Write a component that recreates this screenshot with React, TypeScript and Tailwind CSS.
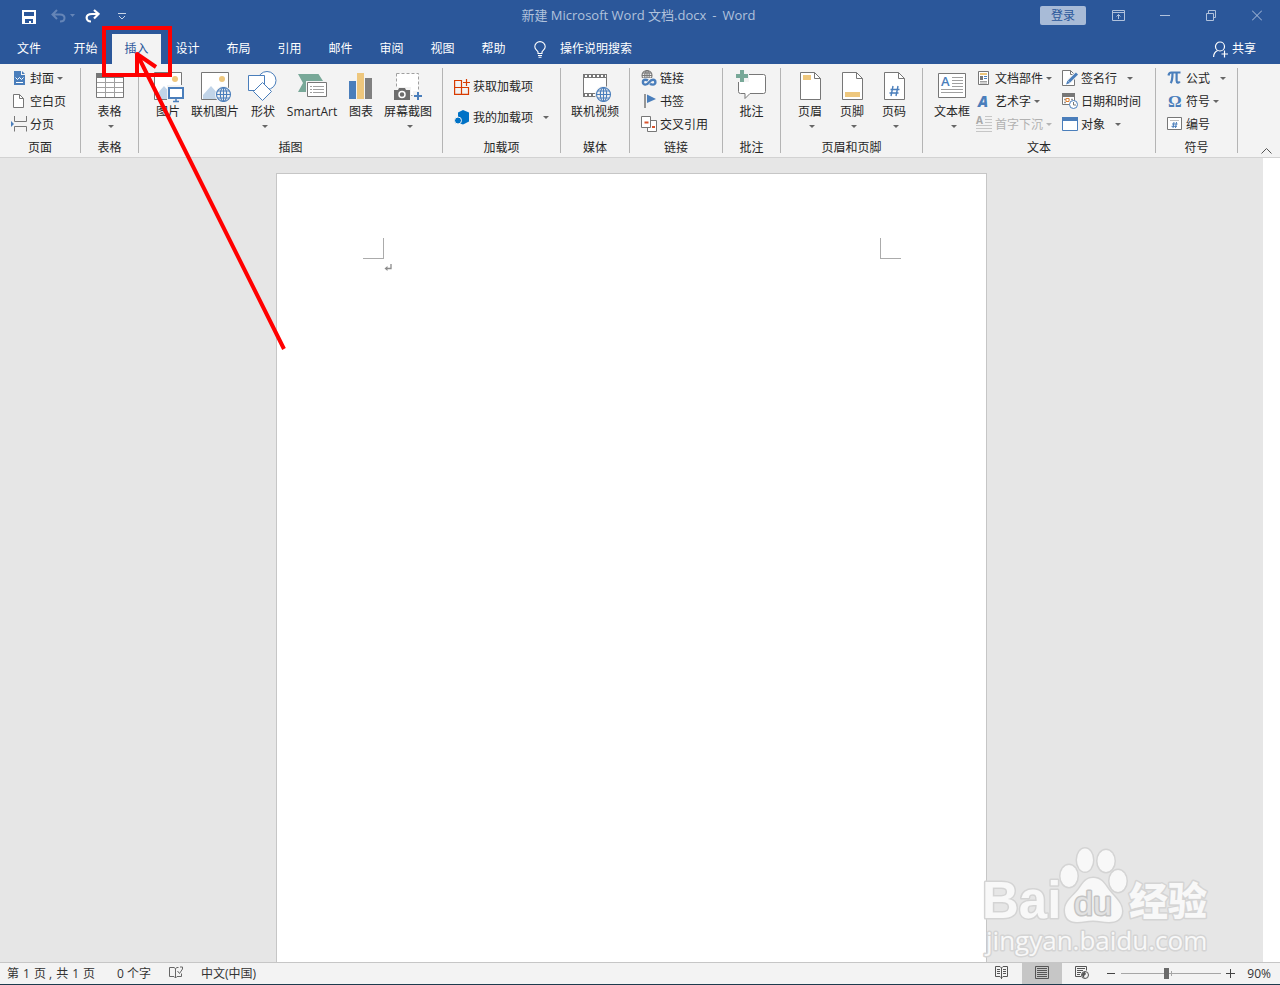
import type { ReactNode } from "react";

const BLUE = "#4a7ebb";
const GRAY = "#777777";

function Caret({ muted }: { muted?: boolean }) {
    return (
        <svg width="6" height="3" viewBox="0 0 6 3" className="shrink-0">
            <path d="M0 0h6L3 3z" fill={muted ? "#b5b5b5" : "#666666"} />
        </svg>
    );
}

function Icon16({ children }: { children: ReactNode }) {
    return (
        <svg width="16" height="17" viewBox="0 0 16 17" fill="none" className="shrink-0 overflow-visible">
            {children}
        </svg>
    );
}

function Icon32({ children }: { children: ReactNode }) {
    return (
        <svg width="32" height="32" viewBox="0 0 32 32" fill="none" className="shrink-0 overflow-visible">
            {children}
        </svg>
    );
}

function Globe({ cx, cy, r, color = BLUE }: { cx: number; cy: number; r: number; color?: string }) {
    return (
        <g stroke={color} strokeWidth="1.1">
            <circle cx={cx} cy={cy} r={r} fill="#f3f3f3" />
            <ellipse cx={cx} cy={cy} rx={r * 0.45} ry={r} />
            <path d={`M${cx - r} ${cy}h${r * 2}M${cx} ${cy - r}v${r * 2}`} />
            <path d={`M${cx - r * 0.85} ${cy - r * 0.5}h${r * 1.7}M${cx - r * 0.85} ${cy + r * 0.5}h${r * 1.7}`} />
        </g>
    );
}

function Photo() {
    return (
        <>
            <path d="M2.5 1.5h27v27h-27z" fill="#fff" stroke={GRAY} />
            <path d="M4 28v-4l8-9 8 9v4z" fill="#c1d4e8" />
            <circle cx="23" cy="8" r="3" fill="#eec77d" />
        </>
    );
}

function Sheet({ children }: { children: ReactNode }) {
    return (
        <Icon32>
            <path d="M6.5 1.5h14l6 6v21h-20z" fill="#fff" stroke={GRAY} />
            <path d="M20.5 1.5v6h6" stroke={GRAY} />
            {children}
        </Icon32>
    );
}

interface GroupProps {
    label: string;
    className: string;
    children: ReactNode;
}

function Group({ label, className, children }: GroupProps) {
    return (
        <section aria-label={label} className={`flex shrink-0 ${className}`}>
            <div className="flex flex-1 flex-col">
                <div className="flex h-[72px] shrink-0">{children}</div>
                <div className="text-center leading-6">{label}</div>
            </div>
            <div className="my-1 w-px bg-[#b4b4b4]" />
        </section>
    );
}

interface BigButtonProps {
    icon: ReactNode;
    label: string;
    caret?: boolean;
    className?: string;
}

function BigButton({ icon, label, caret, className = "w-full" }: BigButtonProps) {
    return (
        <button className={`flex shrink-0 flex-col items-center pt-[7px] ${className}`}>
            {icon}
            <span className="mt-px leading-4 whitespace-nowrap">{label}</span>
            {caret && (
                <span className="mt-[5px] ml-[3px] flex">
                    <Caret />
                </span>
            )}
        </button>
    );
}

interface SmallButtonProps {
    icon: ReactNode;
    label: string;
    caret?: "near" | "far";
    tall?: boolean;
    disabled?: boolean;
}

function SmallButton({ icon, label, caret, tall, disabled }: SmallButtonProps) {
    return (
        <button
            disabled={disabled}
            className={`flex items-center gap-[3px] whitespace-nowrap ${tall ? "h-[31px]" : "h-[23px]"} ${disabled ? "text-[#b1b1b1]" : ""}`}
        >
            {icon}
            <span>{label}</span>
            {caret && (
                <span className={caret === "far" ? "ml-[7px]" : ""}>
                    <Caret muted={disabled} />
                </span>
            )}
        </button>
    );
}

function TitleBar() {
    return (
        <header className="grid h-[30px] grid-cols-[1fr_auto_1fr] items-center">
            <div className="flex items-center pl-[22px]">
                <button aria-label="保存">
                    <svg width="14" height="14" viewBox="0 0 14 14" className="mt-1" shapeRendering="crispEdges">
                        <path d="M0 0h14v14H0z" fill="#fff" />
                        <path d="M2 2h10v4H2zM3 9h8v4H9v-2H7v2H3z" fill="#2b579a" />
                    </svg>
                </button>
                <button aria-label="撤消" className="ml-[15px] flex items-center gap-[3px]">
                    <svg width="16" height="14" viewBox="0 0 16 14" fill="none" stroke="#6585b7" strokeWidth="2" className="mt-0.5">
                        <path d="M6 1L1.5 5.5 6 10M2 5.5h7c6 0 6 7 0 7" />
                    </svg>
                    <svg width="5" height="3" viewBox="0 0 5 3">
                        <path d="M0 0h5L2.5 3z" fill="#6585b7" />
                    </svg>
                </button>
                <button aria-label="恢复" className="ml-[10px]">
                    <svg width="15" height="14" viewBox="0 0 15 14" fill="none" stroke="#fff" strokeWidth="2.2" className="mt-0.5">
                        <path d="M9 1l4.5 4L9 9.5M13 5H7C-.5 5 .5 12.500 6 12.500" />
                    </svg>
                </button>
                <button aria-label="自定义快速访问工具栏" className="ml-[18px]">
                    <svg width="8" height="7" viewBox="0 0 8 7" fill="none" stroke="#c8d4e6" className="mt-0.5">
                        <path d="M0 .5h8M1 3l3 3 3-3" />
                    </svg>
                </button>
            </div>
            <h1 className="mr-[3px] flex gap-1.5 text-[13px] text-[#b1c2dc]">
                <span>新建 Microsoft Word 文档.docx</span>
                <span>-</span>
                <span>Word</span>
            </h1>
            <div className="flex items-center justify-end">
                <button className="mr-[10px] h-[19px] w-[46px] rounded-[2px] bg-[#a8bbd7] leading-[19px] text-[#2b579a]">登录</button>
                <button aria-label="功能区显示选项" className="flex w-[46px] justify-center">
                    <svg width="14" height="11" viewBox="0 0 14 11" fill="none" stroke="#b1c2dc">
                        <path d="M.5.5h12v10H.5zM.5 2.500h12M6.500 9V4.500M4.500 6.500l2-2 2 2" />
                    </svg>
                </button>
                <button aria-label="最小化" className="flex w-[46px] justify-center">
                    <svg width="10" height="11" viewBox="0 0 10 11" stroke="#b1c2dc">
                        <path d="M0 5.500h10" />
                    </svg>
                </button>
                <button aria-label="向下还原" className="flex w-[46px] justify-center">
                    <svg width="10" height="11" viewBox="0 0 10 11" fill="none" stroke="#b1c2dc">
                        <path d="M.5 3.500h7v7h-7zM2.500 3.500v-3h7v7h-2" />
                    </svg>
                </button>
                <button aria-label="关闭" className="flex w-[46px] justify-center">
                    <svg width="10" height="11" viewBox="0 0 10 11" stroke="#b1c2dc">
                        <path d="M0 .5l10 10M10 .5l-10 10" />
                    </svg>
                </button>
            </div>
        </header>
    );
}

const TABS = ["开始", "插入", "设计", "布局", "引用", "邮件", "审阅", "视图", "帮助"];

function TabBar() {
    return (
        <nav className="flex h-[34px] items-end">
            <button className="mr-[3px] h-[30px] w-[58px] pb-px">文件</button>
            {TABS.map((tab) => (
                <button
                    key={tab}
                    className={`mr-0.5 h-[30px] w-[49px] pb-px ${tab === "插入" ? "bg-[#f3f3f3] text-[#2b579a]" : ""}`}
                >
                    {tab}
                </button>
            ))}
            <label className="ml-[14px] flex h-[30px] items-center">
                <svg width="12" height="17" viewBox="0 0 12 17" fill="none" stroke="#fff" strokeWidth="1.1">
                    <path d="M4 12.500V11C3.500 9.500.8 8.500.8 5.800a5.200 5.200 0 0 1 10.400 0C11.200 8.500 8.500 9.500 8 11v1.500zM4 14.500h4M4.500 16.300h3" />
                </svg>
                <input
                    type="text"
                    aria-label="操作说明搜索"
                    placeholder="操作说明搜索"
                    className="ml-[14px] w-24 bg-transparent outline-none placeholder:text-white"
                />
            </label>
            <button className="mr-6 ml-auto flex h-[30px] items-center gap-1 pb-px">
                <svg width="15" height="17" viewBox="0 0 15 17" fill="none" stroke="#fff" strokeWidth="1.2" className="mt-0.5">
                    <circle cx="7" cy="5.500" r="4.500" />
                    <path d="M.6 16c0-4 2-5.500 4-6.500M8.500 13h6.500M11.500 9.500v7" />
                </svg>
                共享
            </button>
        </nav>
    );
}

function Ribbon() {
    return (
        <div className="flex h-[94px] border-b border-[#d2d2d2] bg-[#f3f3f3]">
            <Group label="页面" className="w-[81px]">
                <div className="flex flex-col pt-[3px] pl-[11px]">
                    <SmallButton
                        label="封面"
                        caret="near"
                        icon={
                            <Icon16>
                                <path d="M3 1h7v4h4v10H3z" fill={BLUE} />
                                <path d="M11 1l3 3h-3z" fill={BLUE} />
                                <path d="M4.500 7.500l2 2 2-2 2 2 2-2M5 12.500h7" stroke="#fff" />
                            </Icon16>
                        }
                    />
                    <SmallButton
                        label="空白页"
                        icon={
                            <Icon16>
                                <path d="M2.500 1.500h6l4 4v9h-10z" fill="#fff" stroke={GRAY} />
                                <path d="M8.500 1.500v4h4" stroke={GRAY} />
                            </Icon16>
                        }
                    />
                    <SmallButton
                        label="分页"
                        icon={
                            <Icon16>
                                <path d="M3.500 0v5.500h12V0M3.500 15.500v-5h12v5" stroke={GRAY} />
                                <path d="M0 5l3 3-3 3z" fill={BLUE} />
                            </Icon16>
                        }
                    />
                </div>
            </Group>

            <Group label="表格" className="w-[58px]">
                <BigButton
                    label="表格"
                    caret
                    icon={
                        <Icon32>
                            <path d="M2.500 2.500h27v24h-27z" fill="#fff" stroke={GRAY} />
                            <path d="M2 2h28v5H2z" fill={GRAY} />
                            <path d="M3 11.500h26M3 16.500h26M3 21.500h26M11.500 7v19M20.500 7v19" stroke="#a0a0a0" />
                        </Icon32>
                    }
                />
            </Group>

            <Group label="插图" className="w-[304px]">
                <div className="flex pl-[6px]">
                    <BigButton
                        label="图片"
                        className="w-[46px]"
                        icon={
                            <Icon32>
                                <Photo />
                                <path d="M15 14h18v18H15z" fill="#f3f3f3" />
                                <path d="M17 17h14v10H17z" fill="#fff" stroke={BLUE} strokeWidth="2" />
                                <path d="M24 28v2M21 30.500h6" stroke={BLUE} strokeWidth="1.500" />
                            </Icon32>
                        }
                    />
                    <BigButton
                        label="联机图片"
                        className="w-12"
                        icon={
                            <Icon32>
                                <Photo />
                                <circle cx="24.500" cy="23.500" r="8.500" fill="#f3f3f3" />
                                <Globe cx={24.5} cy={23.5} r={7} />
                            </Icon32>
                        }
                    />
                    <BigButton
                        label="形状"
                        caret
                        className="w-12"
                        icon={
                            <Icon32>
                                <g fill="#fff" stroke={BLUE}>
                                    <circle cx="20" cy="9.500" r="9" />
                                    <path d="M1.500 4.500h16v15h-16z" />
                                    <path d="M15.500 11.500l9 9-9 9-9-9z" />
                                </g>
                            </Icon32>
                        }
                    />
                    <BigButton
                        label="SmartArt"
                        className="w-[50px]"
                        icon={
                            <Icon32>
                                <path d="M2 3h20.500l4.500 7H16l-4 11H2l5-9z" fill="#78a898" />
                                <path d="M10 10h22v18H10z" fill="#f3f3f3" />
                                <path d="M11.500 11.500h19v14h-19z" fill="#fff" stroke={GRAY} />
                                <path d="M14 15.500h2M14 18.500h2M14 21.500h2M17 15.500h11M17 18.500h11M17 21.500h11" stroke="#a0a0a0" />
                            </Icon32>
                        }
                    />
                    <BigButton
                        label="图表"
                        className="w-12"
                        icon={
                            <Icon32>
                                <path d="M4 10h7v18H4z" fill={BLUE} />
                                <path d="M12 2h7v26h-7z" fill="#eec77d" />
                                <path d="M20 7h7v21h-7z" fill="#808080" />
                            </Icon32>
                        }
                    />
                    <BigButton
                        label="屏幕截图"
                        caret
                        className="w-[46px]"
                        icon={
                            <Icon32>
                                <path d="M4.500 2.500h22v22h-22z" fill="#fff" stroke="#a0a0a0" strokeDasharray="3 2" />
                                <path d="M1 16h18v14H1zM21 20h10v10H21z" fill="#f3f3f3" />
                                <path d="M2 19h4l1-2h6l1 2h4v10H2z" fill="#6d6d6d" />
                                <circle cx="10" cy="23.500" r="3" stroke="#fff" strokeWidth="1.500" />
                                <path d="M22 25h8M26 21v8" stroke={BLUE} strokeWidth="2" />
                            </Icon32>
                        }
                    />
                </div>
            </Group>

            <Group label="加载项" className="w-[118px]">
                <div className="flex flex-col pt-[7px] pl-[11px]">
                    <SmallButton
                        label="获取加载项"
                        tall
                        icon={
                            <Icon16>
                                <path d="M.6 2.500h6.900v13.900H.6zM.6 9.500h13.900v6.900H.6zM7.500 9.500h7M12.500 1v7M9 4.500h7" stroke="#d83b01" strokeWidth="1.200" />
                            </Icon16>
                        }
                    />
                    <SmallButton
                        label="我的加载项"
                        caret="far"
                        tall
                        icon={
                            <Icon16>
                                <path d="M9 1l6 2.500v9L9 15.500l-3-1V9L4 8V3.500z" fill="#0072c6" />
                                <circle cx="4" cy="11.500" r="3.500" fill="#0072c6" stroke="#f3f3f3" />
                            </Icon16>
                        }
                    />
                </div>
            </Group>

            <Group label="媒体" className="w-[69px]">
                <BigButton
                    label="联机视频"
                    icon={
                        <Icon32>
                            <path d="M4.500 3.500h23v22h-23z" fill="#fff" stroke={GRAY} />
                            <path d="M4 5h24M4 24h24" stroke={GRAY} strokeWidth="4" />
                            <path d="M6 5h21M6 24h21" stroke="#fff" strokeWidth="2" strokeDasharray="2 2" />
                            <circle cx="24.500" cy="23.500" r="8.500" fill="#f3f3f3" />
                            <Globe cx={24.5} cy={23.5} r={7} />
                        </Icon32>
                    }
                />
            </Group>

            <Group label="链接" className="w-[93px]">
                <div className="flex flex-col pt-[3px] pl-[11px]">
                    <SmallButton
                        label="链接"
                        icon={
                            <Icon16>
                                <Globe cx={6} cy={5.5} r={5} color={GRAY} />
                                <path d="M0 8h16v9H0z" fill="#f3f3f3" />
                                <path
                                    d="M7 10.500C6 9.800 5.500 9.800 4.300 9.800a2.300 2.300 0 0 0 0 4.800c4 0 3.700-4.800 7.700-4.800a2.300 2.300 0 0 1 0 4.800c-1.300 0-2 0-3-.8"
                                    stroke={BLUE}
                                    strokeWidth="2.400"
                                />
                            </Icon16>
                        }
                    />
                    <SmallButton
                        label="书签"
                        icon={
                            <Icon16>
                                <path d="M4 1v14" stroke={GRAY} strokeWidth="1.500" />
                                <path d="M6 1.500l9 4.500-9 4z" fill={BLUE} />
                            </Icon16>
                        }
                    />
                    <SmallButton
                        label="交叉引用"
                        icon={
                            <Icon16>
                                <path d="M.5.500h9v11h-9z" fill="#fff" stroke={GRAY} />
                                <path d="M6.500 15.500v-4M9.500 4.500h6v11h-9" stroke={GRAY} />
                                <path d="M10 5h5v10H7v-3h3z" fill="#fff" />
                                <path d="M3.500 5.500h4v2h-4zM11 10h3v2h-3z" fill="#d9532c" />
                            </Icon16>
                        }
                    />
                </div>
            </Group>

            <Group label="批注" className="w-[58px]">
                <BigButton
                    label="批注"
                    icon={
                        <Icon32>
                            <path d="M4.500 3.500h23a2 2 0 0 1 2 2v15a2 2 0 0 1-2 2H14l-5 5v-5H4.500a2 2 0 0 1-2-2v-15a2 2 0 0 1 2-2z" fill="#fff" stroke={GRAY} />
                            <path d="M0 2h13v9H0z" fill="#f3f3f3" />
                            <path d="M0 5h12M6-1v12" stroke="#78a898" strokeWidth="4" />
                        </Icon32>
                    }
                />
            </Group>

            <Group label="页眉和页脚" className="w-[142px]">
                <div className="flex pl-2">
                    <BigButton
                        label="页眉"
                        caret
                        className="w-[42px]"
                        icon={
                            <Sheet>
                                <path d="M9 4h8v5H9z" fill="#eec77d" />
                            </Sheet>
                        }
                    />
                    <BigButton
                        label="页脚"
                        caret
                        className="w-[42px]"
                        icon={
                            <Sheet>
                                <path d="M9 21h15v5H9z" fill="#eec77d" />
                            </Sheet>
                        }
                    />
                    <BigButton
                        label="页码"
                        caret
                        className="w-[42px]"
                        icon={
                            <Sheet>
                                <path d="M15 15l-2 10M20 15l-2 10M12.500 18.500h9M11.500 22h9" stroke={BLUE} strokeWidth="1.400" />
                            </Sheet>
                        }
                    />
                </div>
            </Group>

            <Group label="文本" className="w-[233px]">
                <div className="flex pl-[5px]">
                    <BigButton
                        label="文本框"
                        caret
                        className="w-12"
                        icon={
                            <Icon32>
                                <path d="M2.500 2.500h27v24h-27z" fill="#fff" stroke={GRAY} />
                                <path d="M16 6.500h11M16 9.500h11M16 12.500h11M16 15.500h11M5 18.500h22M5 21.500h22" stroke="#a0a0a0" />
                                <text x="5" y="15" fontSize="13" fontWeight="600" fill={BLUE}>
                                    A
                                </text>
                            </Icon32>
                        }
                    />
                    <div className="flex w-[86px] flex-col pt-[3px]">
                        <SmallButton
                            label="文档部件"
                            caret="near"
                            icon={
                                <Icon16>
                                    <path d="M2.500 1.500h10v13h-10z" fill="#fff" stroke={GRAY} />
                                    <path d="M4 3h7v2H4z" fill="#eec77d" />
                                    <path d="M4 6h3v4H4z" fill={GRAY} />
                                    <path d="M8 6.500h3M8 8.500h3" stroke={BLUE} />
                                    <path d="M4 11.500h7M4 13h7" stroke="#a0a0a0" />
                                </Icon16>
                            }
                        />
                        <SmallButton
                            label="艺术字"
                            caret="near"
                            icon={
                                <Icon16>
                                    <text x="2" y="14" fontSize="15" fontWeight="800" fontStyle="italic" fill={BLUE}>
                                        A
                                    </text>
                                </Icon16>
                            }
                        />
                        <SmallButton
                            label="首字下沉"
                            caret="near"
                            disabled
                            icon={
                                <Icon16>
                                    <path d="M9 .5h7M9 3.500h7M9 6.500h7M0 9.500h16M0 12.500h16M0 15.500h16" stroke="#c6c6c6" />
                                    <text x="0" y="8" fontSize="10" fontWeight="700" fill="#a8a8a8">
                                        A
                                    </text>
                                </Icon16>
                            }
                        />
                    </div>
                    <div className="flex flex-col pt-[3px]">
                        <SmallButton
                            label="签名行"
                            caret="far"
                            icon={
                                <Icon16>
                                    <path d="M.5.500h8l4 4v11H.5z" fill="#fff" stroke={GRAY} />
                                    <path d="M8.500.5v4h4" stroke={GRAY} />
                                    <path d="M14.500 4L7 11.500" stroke="#f3f3f3" strokeWidth="5" />
                                    <path d="M15 3.500L7 11.500" stroke={BLUE} strokeWidth="3" />
                                    <path d="M5.500 10.500l2.500 2.500-4 1.500z" fill={BLUE} />
                                </Icon16>
                            }
                        />
                        <SmallButton
                            label="日期和时间"
                            icon={
                                <Icon16>
                                    <path d="M.5.500h12v11H.5z" fill="#fff" stroke={GRAY} />
                                    <path d="M0 0h13v4H0z" fill={GRAY} />
                                    <path d="M2 6.500h9M2 9.500h3" stroke="#999" strokeWidth="1.500" strokeDasharray="2 1.500" />
                                    <path d="M4 5.500h3v3H4z" fill="#fff" stroke="#e08030" />
                                    <circle cx="11.500" cy="11.500" r="4" fill="#fff" stroke={BLUE} />
                                    <path d="M11.500 9v3h2.500" stroke={GRAY} />
                                </Icon16>
                            }
                        />
                        <SmallButton
                            label="对象"
                            caret="far"
                            icon={
                                <Icon16>
                                    <path d="M.5 1.500h15v13H.5z" fill="#fff" stroke={BLUE} />
                                    <path d="M0 1h16v4H0z" fill={BLUE} />
                                </Icon16>
                            }
                        />
                    </div>
                </div>
            </Group>

            <Group label="符号" className="w-[82px]">
                <div className="flex flex-col pt-[3px] pl-[11px]">
                    <SmallButton
                        label="公式"
                        caret="far"
                        icon={
                            <Icon16>
                                <path
                                    d="M1.500 5.500c.3-2 1.200-3 2.800-3H13.500M5.500 3c0 5-.3 8-1.800 10.200M9.600 3v7.500c0 2.500 2 2.800 3.200 1"
                                    stroke={BLUE}
                                    strokeWidth="2.200"
                                />
                            </Icon16>
                        }
                    />
                    <SmallButton
                        label="符号"
                        caret="near"
                        icon={
                            <Icon16>
                                <text x="1" y="14" fontSize="17" fontWeight="700" fontFamily="Liberation Serif, serif" fill={BLUE}>
                                    Ω
                                </text>
                            </Icon16>
                        }
                    />
                    <SmallButton
                        label="编号"
                        icon={
                            <Icon16>
                                <path d="M.5 1.500h14v12H.5z" fill="#fff" stroke={GRAY} />
                                <path d="M3 4.500h9" stroke="#c0c0c0" />
                                <path d="M7 6l-1 6M9.500 6l-1 6M5 8h5.500M4.500 10.300H10" stroke={BLUE} />
                            </Icon16>
                        }
                    />
                </div>
            </Group>

            <button aria-label="折叠功能区" className="mt-auto mr-2 mb-[3px] ml-auto">
                <svg width="11" height="6" viewBox="0 0 11 6" fill="none" stroke="#555">
                    <path d="M.5 5.500l5-5 5 5" />
                </svg>
            </button>
        </div>
    );
}

function Watermark() {
    return (
        <svg
            width="236"
            height="120"
            viewBox="0 0 236 120"
            className="absolute right-[62px] bottom-0 overflow-visible"
            fill="#f8f8f8"
            stroke="#d4d4d4"
            strokeWidth="3"
            strokeLinejoin="round"
            paintOrder="stroke"
        >
            <text x="0" y="76" fontSize="51" fontWeight="700" fontFamily="Liberation Sans, sans-serif">
                Bai
            </text>
            <ellipse cx="87" cy="34" rx="8.500" ry="11" />
            <ellipse cx="103" cy="18" rx="8" ry="11.500" />
            <ellipse cx="124" cy="19" rx="8.500" ry="11" />
            <ellipse cx="136" cy="39" rx="8.500" ry="11" />
            <path d="M111 36c8 0 11 5 15 11s14 13 14 22c0 8-6 11-13 11-6 0-10-1.500-16-1.500S101 80 95 80c-8 0-12-4-12-12 0-9 9-14 14-21s7-11 14-11z" />
            <text x="92" y="73" fontSize="34" fontFamily="Liberation Sans, sans-serif" fill="#e2e2e2" stroke="#c4c4c4">
                du
            </text>
            <text x="147" y="73" fontSize="39" fontWeight="900" fontFamily="Noto Sans CJK SC, sans-serif">
                经验
            </text>
            <text x="4" y="108" fontSize="26" fontFamily="Open Sans, sans-serif">
                jingyan.baidu.com
            </text>
        </svg>
    );
}

function DocumentArea() {
    return (
        <main className="relative flex flex-1 overflow-hidden bg-[#e6e6e6]">
            <div className="flex flex-1 justify-center pt-[15px]">
                <article className="w-[711px] border border-b-0 border-[#c6c6c6] bg-white pt-16 pr-[85px] pl-[86px]">
                    <div className="flex justify-between">
                        <div className="size-[21px] border-r border-b border-[#ababab]" />
                        <div className="size-[21px] border-b border-l border-[#ababab]" />
                    </div>
                    <svg width="8" height="8" viewBox="0 0 8 8" fill="none" stroke="#8c8c8c" className="mt-[5px] ml-[21px]">
                        <path d="M7 0v4.500H2" strokeWidth="1.300" />
                        <path d="M3.500 2v5L.5 4.500z" fill="#8c8c8c" stroke="none" />
                    </svg>
                </article>
            </div>
            <div className="w-[17px] bg-white" />
            <Watermark />
        </main>
    );
}

function StatusBar() {
    return (
        <footer className="flex h-[22px] items-center border-t border-[#c6c6c6] bg-[#f3f3f3] pl-[7px] text-[#333]">
            <div className="flex gap-1">
                <span>第</span>
                <span>1</span>
                <span>页 ,</span>
                <span>共</span>
                <span>1</span>
                <span>页</span>
            </div>
            <span className="ml-[22px]">0 个字</span>
            <button aria-label="校对" className="ml-[18px]">
                <svg width="14" height="13" viewBox="0 0 14 13" fill="none" stroke="#666" className="mb-0.5">
                    <path d="M6.500 2.500L5 1.500H.5v9H5l1.500 1.500 1.500-1.500h4.500v-3M6.500 2.500V12M6.500 2.500L8 1.500h1.500M8.500 5l2 2.500L13.500 3V1H11" />
                </svg>
            </button>
            <span className="ml-[18px]">中文(中国)</span>
            <div className="ml-auto flex h-full items-center">
                <button aria-label="阅读视图" className="flex w-10 justify-center">
                    <svg width="14" height="13" viewBox="0 0 14 13" fill="none" stroke="#555" className="mb-0.5">
                        <path d="M6.500 2v11M.5.500H5L6.500 2 8 .5h4.500v10H8L6.500 12 5 10.500H.5zM2 3.500h3M2 5.500h3M2 7.500h3M8 3.500h3M8 5.500h3M8 7.500h3" />
                    </svg>
                </button>
                <button aria-label="页面视图" className="flex h-full w-10 items-center justify-center bg-[#c6c6c6]">
                    <svg width="14" height="13" viewBox="0 0 14 13" fill="none" stroke="#555" className="mb-0.5">
                        <path d="M.5.500h13v12H.5zM2 2.500h10M2 4.500h10M2 6.500h10M2 8.500h10M2 10.500h10" />
                    </svg>
                </button>
                <button aria-label="Web 版式视图" className="flex w-10 justify-center">
                    <svg width="14" height="13" viewBox="0 0 14 13" fill="none" stroke="#555" className="mb-0.5">
                        <path d="M6 10.500H.5V.5h11v4M2 2.500h8M2 4.500h6M2 6.500h4M2 8.500h3" />
                        <circle cx="10" cy="9" r="3.500" fill="#f3f3f3" />
                        <path d="M7 8c1-2 3-2 3-2l1 2-2 2 .5 2C8 11.500 7 10 7 8z" fill="#555" stroke="none" />
                    </svg>
                </button>
                <button aria-label="缩小" className="ml-[5px] h-px w-2 bg-[#444]" />
                <div className="relative ml-1.5 flex items-center">
                    <input
                        type="range"
                        aria-label="缩放"
                        defaultValue={45}
                        className="h-[11px] w-[100px] appearance-none bg-transparent [&::-webkit-slider-runnable-track]:h-px [&::-webkit-slider-runnable-track]:bg-[#a6a6a6] [&::-webkit-slider-thumb]:-mt-[5px] [&::-webkit-slider-thumb]:h-[11px] [&::-webkit-slider-thumb]:w-[5px] [&::-webkit-slider-thumb]:appearance-none [&::-webkit-slider-thumb]:bg-[#6a6a6a]"
                    />
                    <span className="absolute left-1/2 h-[5px] w-px bg-[#a6a6a6]" />
                </div>
                <button aria-label="放大" className="ml-[5px]">
                    <svg width="9" height="9" viewBox="0 0 9 9" stroke="#444">
                        <path d="M0 4.500h9M4.500 0v9" />
                    </svg>
                </button>
                <span className="mr-[9px] ml-3">90%</span>
            </div>
        </footer>
    );
}

function Annotation() {
    return (
        <svg
            width="300"
            height="360"
            viewBox="0 0 300 360"
            fill="none"
            stroke="#ff0000"
            strokeWidth="4"
            className="pointer-events-none absolute top-0 left-0"
        >
            <path d="M104 28h66v47h-66z" />
            <path d="M137 54l147 295M137 75V54l19 13" strokeLinejoin="round" />
        </svg>
    );
}

export default function App() {
    return (
        <div className="relative flex h-screen flex-col overflow-hidden border-b border-[#1d3a4d] font-['Open_Sans','Noto_Sans_CJK_SC',sans-serif] text-[12px] leading-4 text-[#262626]">
            <div className="bg-[#2b579a] text-white">
                <TitleBar />
                <TabBar />
            </div>
            <Ribbon />
            <DocumentArea />
            <StatusBar />
            <Annotation />
        </div>
    );
}
